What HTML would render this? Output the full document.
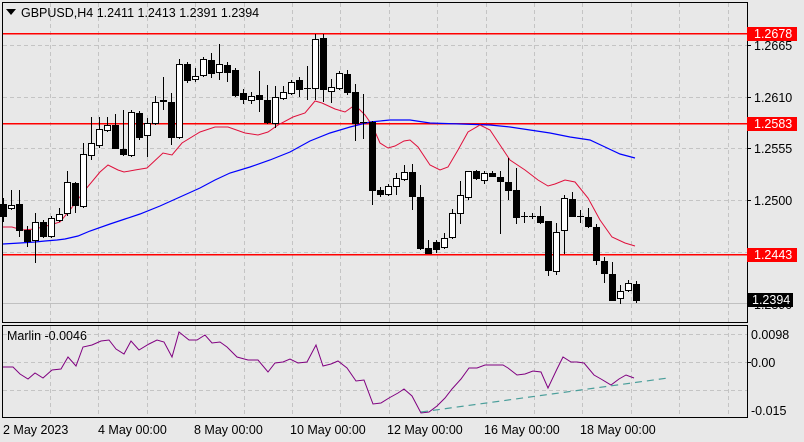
<!DOCTYPE html>
<html><head><meta charset="utf-8"><style>
html,body{margin:0;padding:0;background:#e8e8e8;}
svg{display:block;font-family:"Liberation Sans",sans-serif;}
</style></head><body>
<svg id="s" width="804" height="442" xmlns="http://www.w3.org/2000/svg">
<rect width="804" height="442" fill="#e8e8e8"/>
<g id="grid" stroke="#c4c4c4" stroke-dasharray="4,3" stroke-width="1"></g>
<line x1="2" y1="303.5" x2="747" y2="303.5" stroke="#c0c0c0"/>
<g shape-rendering="crispEdges" stroke="#ff0000" stroke-width="1.5">
<line x1="2" y1="33.5" x2="747" y2="33.5"/>
<line x1="2" y1="123.5" x2="747" y2="123.5"/>
<line x1="2" y1="254.5" x2="747" y2="254.5"/>
</g>
<polyline id="blue" fill="none" stroke="#0000ff" stroke-width="1.2"/>
<polyline id="red" fill="none" stroke="#e0103c" stroke-width="1"/>
<g id="candles"></g>
<polyline id="marlin" fill="none" stroke="#800080" stroke-width="1"/>
<line x1="421" y1="412" x2="668" y2="378" stroke="#4a9e9a" stroke-dasharray="7,5" stroke-width="1.2"/>
<rect x="2.5" y="2.5" width="745" height="320" fill="none" stroke="#000"/>
<rect x="2.5" y="325.5" width="745" height="92" fill="none" stroke="#000"/>
<g font-size="12.5" fill="#000">
<path d="M6 9 L16 9 L11 15 Z" fill="#000"/>
<text x="21" y="17">GBPUSD,H4  1.2411 1.2413 1.2391 1.2394</text>
<text x="7" y="340">Marlin -0.0046</text>
<text x="754" y="50">1.2665</text>
<text x="754" y="102">1.2610</text>
<text x="754" y="153">1.2555</text>
<text x="754" y="205">1.2500</text>
<text x="754" y="309">1.2390</text>
<text x="751" y="339">0.0098</text>
<text x="751" y="367">0.00</text>
<text x="751" y="415">-0.015</text>
<text x="3" y="434">2 May 2023</text>
<text x="98" y="434">4 May 00:00</text>
<text x="194" y="434">8 May 00:00</text>
<text x="290" y="434">10 May 00:00</text>
<text x="387" y="434">12 May 00:00</text>
<text x="484" y="434">16 May 00:00</text>
<text x="580" y="434">18 May 00:00</text>
</g>
<g font-size="12.5">
<rect x="747" y="27" width="50" height="14" fill="#f00"/><text x="754" y="38" fill="#fff">1.2678</text>
<rect x="747" y="117" width="50" height="14" fill="#f00"/><text x="754" y="128" fill="#fff">1.2583</text>
<rect x="747" y="248" width="50" height="14" fill="#f00"/><text x="754" y="259" fill="#fff">1.2443</text>
<rect x="747" y="293" width="46" height="14" fill="#000"/><text x="752" y="304" fill="#fff">1.2394</text>
</g>
<g stroke="#000"><line x1="747" y1="45.5" x2="751" y2="45.5"/><line x1="747" y1="97.5" x2="751" y2="97.5"/><line x1="747" y1="148.5" x2="751" y2="148.5"/><line x1="747" y1="200.5" x2="751" y2="200.5"/><line x1="747" y1="362.5" x2="751" y2="362.5"/></g>
</svg>
<script>
var NS="http://www.w3.org/2000/svg";
function el(t,a,p){var e=document.createElementNS(NS,t);for(var k in a)e.setAttribute(k,a[k]);p.appendChild(e);return e;}
var g=document.getElementById('grid');
[45,97,148,200,252].forEach(function(y){el('line',{x1:3,y1:y+.5,x2:747,y2:y+.5},g);});
[334,362,390].forEach(function(y){el('line',{x1:3,y1:y+.5,x2:747,y2:y+.5},g);});
for(var x=50;x<747;x+=48.4){var xx=Math.round(x)+.5;el('line',{x1:xx,y1:3,x2:xx,y2:322},g);el('line',{x1:xx,y1:326,x2:xx,y2:417},g);}
var C=[[3,204,216,198,222],[11,208,205,190,210],[19,204,230,190,237],[27,230,241,226,247],[35,240,222,213,263],[43,222,236,220,238],
[51,236,218,216,238],[59,220,214,208,222],[67,213,182,171,216],[75,183,205,182,213],[83,206,154,143,208],[91,155,143,117,160],
[99,145,129,117,148],[107,130,125,117,132],[115,125,148,114,149],[123,149,154,110,156],[131,155,112,110,157],[139,113,137,111,140],
[147,135,123,118,157],[155,123,102,96,125],[163,100,101,77,110],[171,102,137,93,145],[179,137,64,59,139],[187,64,80,62,83],
[195,79,76,68,82],[203,75,59,57,77],[211,60,73,53,78],[219,72,64,44,80],[227,65,72,62,82],[235,70,95,68,97],[243,93,99,89,104],
[251,100,96,92,104],[259,95,99,71,112],[267,100,122,85,124],[275,123,97,86,128],[283,98,92,86,100],[291,93,82,80,95],[299,80,89,77,97],
[307,88,88,66,100],[315,88,39,34,100],[323,38,89,34,102],[331,91,87,79,103],[339,88,73,71,90],[347,74,92,70,95],[355,92,123,84,141],
[363,122,122,94,139],[372,122,190,121,205],[380,190,194,187,197],[388,194,186,184,196],[396,186,178,173,195],[404,179,172,165,181],
[412,172,196,164,210],[420,197,248,185,250],[428,248,253,240,253],[436,242,249,240,253],[444,247,238,233,249],[452,237,213,209,239],
[460,213,195,181,224],[468,197,171,171,200],[476,171,178,170,180],[484,180,173,171,184],[492,173,176,171,177],[500,177,181,171,234],
[508,182,190,158,200],[516,190,217,168,224],[524,216,216,212,223],[532,216,216,213,219],[540,216,222,206,224],[548,221,270,221,276],
[556,271,232,223,275],[564,230,198,195,254],[572,199,216,192,217],[580,216,216,210,223],[588,217,226,208,228],[596,227,260,224,265],
[604,261,273,257,283],[612,274,300,262,301],[620,298,291,285,304],[628,290,283,280,292],[636,284,300,281,303]];
var cg=document.getElementById('candles');
C.forEach(function(c){var x=c[0],o=c[1],cl=c[2],h=c[3],l=c[4];
el('line',{x1:x+.5,y1:h,x2:x+.5,y2:l,stroke:'#000'},cg);
var t=Math.min(o,cl),b=Math.max(o,cl);
if(b-t<1){el('line',{x1:x-3,y1:t+.5,x2:x+4,y2:t+.5,stroke:'#000'},cg);}
else if(cl<o){el('rect',{x:x-2.5,y:t+.5,width:6,height:b-t,fill:'#fff',stroke:'#000'},cg);}
else{el('rect',{x:x-3,y:t,width:7,height:b-t+1,fill:'#000'},cg);}});
function pl(id,pts){document.getElementById(id).setAttribute('points',pts.map(function(p){return p.join(',')}).join(' '));}
pl('red',[[3,227],[12,227],[22,230],[35,229],[50,225],[60,222],[70,210],[85,190],[100,172],[108,165],[118,170],[124,172],[135,170],[147,168],[163,153],[172,155],[182,143],[200,132],[215,127],[228,127],[245,133],[258,135],[268,132],[278,125],[293,117],[305,113],[315,101],[322,103],[335,109],[345,112],[355,105],[365,115],[372,125],[380,143],[388,148],[395,146],[404,141],[410,140],[418,147],[430,165],[440,170],[448,167],[458,150],[468,132],[480,125],[490,130],[500,145],[510,160],[525,170],[538,180],[548,186],[555,184],[565,180],[575,182],[588,198],[600,220],[612,237],[625,243],[635,246]]);
pl('blue',[[3,244],[20,243],[35,242],[45,241],[57,240],[65,239],[78,236],[90,231],[110,224],[125,219],[140,214],[160,206],[180,197],[200,188],[215,180],[230,173],[250,167],[270,160],[290,152],[310,141],[330,133],[350,127],[370,122],[390,120],[410,120],[430,123],[460,124],[490,125],[510,127],[530,130],[550,133],[570,137],[590,140],[605,147],[620,154],[635,158]]);
var M=[[2,367],[10,367],[16,374],[22,379],[28,373],[34,378],[41,370],[48,369],[54,357],[60,366],[66,347],[73,345],[80,341],[86,340],[92,349],[98,354],[104,341],[110,350],[118,344],[124,340],[130,342],[136,357],[142,332],[150,340],[156,340],[162,335],[168,343],[174,342],[180,347],[188,357],[196,360],[204,360],[212,372],[218,363],[224,362],[230,359],[236,363],[243,362],[250,345],[256,366],[262,364],[268,361],[275,368],[282,381],[288,380],[295,404],[302,403],[308,398],[315,393],[320,389],[326,396],[333,413],[340,412],[346,406],[352,398],[358,389],[365,379],[371,368],[378,368],[384,365],[398,365],[402,368],[409,375],[416,374],[422,371],[428,372],[434,388],[441,369],[446,357],[452,362],[457,362],[462,363],[470,375],[476,379],[484,385],[490,379],[496,375],[502,378]];
pl('marlin',M.map(function(p){return [Math.round(p[0]*1.263),p[1]];}));
</script>
</body></html>
